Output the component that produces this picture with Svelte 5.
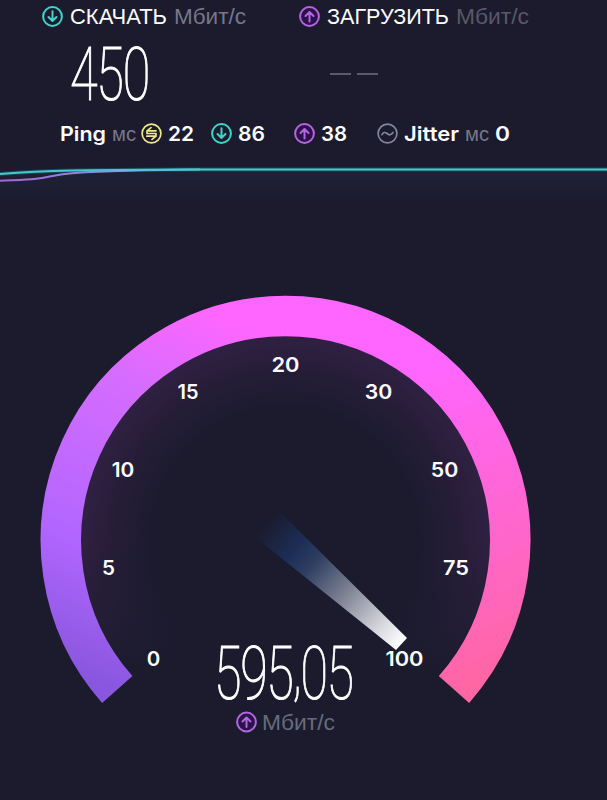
<script lang="ts">
  type IconKind = "down" | "up" | "idle" | "jitter";

  const ticks = [
    { value: "0", x: 153.5, y: 666, width: 13.5 },
    { value: "5", x: 108.5, y: 575, width: 13 },
    { value: "10", x: 123, y: 477, width: 22.5 },
    { value: "15", x: 188, y: 398.5, width: 21 },
    { value: "20", x: 285.5, y: 372, width: 28 },
    { value: "30", x: 378.5, y: 398.5, width: 27.5 },
    { value: "50", x: 444.5, y: 477, width: 27.5 },
    { value: "75", x: 456, y: 575, width: 26 },
    { value: "100", x: 404.5, y: 666, width: 38 },
  ];
</script>

{#snippet glyph(kind: IconKind)}
  <g class="icon {kind}">
    <circle cx="10.5" cy="10.5" r="9.4" />
    {#if kind === "down"}
      <path d="M10.5 5.2V15M6.5 11l4 4 4-4" />
    {:else if kind === "up"}
      <path d="M10.5 15.6V6M6.5 10l4-4 4 4" />
    {:else if kind === "idle"}
      <path d="M15 7.8H6l4-3.2M6 7.8v2.7h9v2.7l-4 3.2M15 13.2H5.8" />
    {:else}
      <path d="M5 11.7c1.3-2.6 3.1-2.8 5-1.2 2.1 1.8 4.1 1.9 6-1" />
    {/if}
  </g>
{/snippet}

{#snippet icon(kind: IconKind)}
  <svg width="21" height="21" viewBox="0 0 21 21">{@render glyph(kind)}</svg>
{/snippet}

<!-- Text stretched to a fixed width -->
{#snippet label(text: string, width: number, name: string)}
  <svg class="label" {width} height="30">
    <text class={name} x="0" y="22.5" textLength={width} lengthAdjust="spacingAndGlyphs">{text}</text>
  </svg>
{/snippet}

<main class="speedtest">
  <section class="panels">
    <div class="panel">
      <header>
        {@render icon("down")}
        {@render label("СКАЧАТЬ", 97, "title")}
        {@render label("Мбит/с", 72, "unit")}
      </header>
      <svg class="value" width="82" height="70">
        <text class="digits" transform="translate(-1 68) scale(.68 1)" textLength="118">450</text>
      </svg>
    </div>
    <div class="panel upload">
      <header>
        {@render icon("up")}
        {@render label("ЗАГРУЗИТЬ", 122, "title")}
        {@render label("Мбит/с", 73, "unit dim")}
      </header>
      <div class="dashes"><i></i><i></i></div>
    </div>
  </section>

  <section class="latency">
    <div class="metric ping">
      {@render label("Ping", 46, "strong")}
      {@render label("мс", 24, "ms")}
    </div>
    <div class="metric idle-value">
      {@render icon("idle")}
      {@render label("22", 26, "strong")}
    </div>
    <div class="metric down-value">
      {@render icon("down")}
      {@render label("86", 27, "strong")}
    </div>
    <div class="metric up-value">
      {@render icon("up")}
      {@render label("38", 26, "strong")}
    </div>
    <div class="metric jitter-value">
      {@render icon("jitter")}
      {@render label("Jitter", 55, "strong")}
      {@render label("мс", 24, "ms")}
      {@render label("0", 15, "strong")}
    </div>
  </section>

  <svg class="graph" width="607" height="60" viewBox="0 150 607 60">
    <defs>
      <linearGradient id="area" x1="0" y1="0" x2="0" y2="1">
        <stop offset="0" stop-color="#1f2136" />
        <stop offset="1" stop-color="#1b1b2d" />
      </linearGradient>
      <linearGradient id="uploadLine" gradientUnits="userSpaceOnUse" x1="0" y1="0" x2="200" y2="0">
        <stop offset="0" stop-color="#a267d4" />
        <stop offset=".4" stop-color="#9a7fe5" />
        <stop offset=".65" stop-color="#6fb0ea" />
        <stop offset="1" stop-color="#48c9ce" />
      </linearGradient>
    </defs>
    <path d="M0 174C50 170 90 170 200 169.5H607V205H0Z" fill="url(#area)" />
    <path class="line-edge" d="M0 174C50 170 90 170 200 169.5H607" />
    <path class="line" d="M0 174C50 170 90 170 200 169.5H607" />
    <path d="M0 180.8C15 180 25 179.8 36 178.7C50 177 55 174.3 75 173C110 170.6 150 170 200 169.6" fill="none" stroke="url(#uploadLine)" stroke-width="2" />
  </svg>

  <svg class="gauge" width="607" height="590" viewBox="0 210 607 590">
    <defs>
      <linearGradient id="ringLeft" gradientUnits="userSpaceOnUse" x1="117" y1="690" x2="286" y2="316">
        <stop offset="0" stop-color="#8957df" />
        <stop offset=".3" stop-color="#b266ff" />
        <stop offset=".7" stop-color="#d66cff" />
        <stop offset=".94" stop-color="#ff66ff" />
      </linearGradient>
      <linearGradient id="ringRight" gradientUnits="userSpaceOnUse" x1="286" y1="316" x2="455" y2="690">
        <stop offset=".25" stop-color="#ff66ff" />
        <stop offset=".7" stop-color="#ff66cc" />
        <stop offset="1" stop-color="#ff66a4" />
      </linearGradient>
      <radialGradient id="glow" gradientUnits="userSpaceOnUse" cx="285.5" cy="540.5" r="204">
        <stop offset=".64" stop-color="#1b1b2d" />
        <stop offset=".82" stop-color="#241d37" />
        <stop offset="1" stop-color="#302042" />
      </radialGradient>
      <linearGradient id="fade" gradientUnits="userSpaceOnUse" x1="0" y1="540" x2="0" y2="675">
        <stop offset="0" stop-color="#1b1b2d" stop-opacity="0" />
        <stop offset="1" stop-color="#1b1b2d" />
      </linearGradient>
      <linearGradient id="needle" gradientUnits="userSpaceOnUse" x1="266" y1="524" x2="402" y2="644">
        <stop offset="0" stop-color="#1c2d55" stop-opacity="0" />
        <stop offset=".2" stop-color="#1c2d55" />
        <stop offset=".34" stop-color="#2d3e61" />
        <stop offset=".6" stop-color="#838797" />
        <stop offset=".84" stop-color="#d5d5dc" />
        <stop offset="1" stop-color="#fff" />
      </linearGradient>
    </defs>

    <circle cx="285.5" cy="540.5" r="205" fill="url(#glow)" />
    <rect x="80" y="540" width="412" height="210" fill="url(#fade)" />

    <path class="ring" d="M117.3 689.5A224.6 224.6 0 0 1 286 316" stroke="url(#ringLeft)" />
    <path class="ring" d="M285.5 316A224.8 224.8 0 0 1 454 689.5" stroke="url(#ringRight)" />

    {#each ticks as tick}
      <text class="tick" x={tick.x} y={tick.y} textLength={tick.width} lengthAdjust="spacingAndGlyphs">{tick.value}</text>
    {/each}

    <path d="M280 512L407 638L396 650L255 537Z" fill="url(#needle)" />

    <text class="digits" transform="translate(214 699) scale(.68 1)" textLength="206">595<tspan dy="-6">,</tspan><tspan dy="6">05</tspan></text>
    <g transform="translate(236 711.5)">{@render glyph("up")}</g>
    <text class="unit readout" x="262" y="730" textLength="73" lengthAdjust="spacingAndGlyphs">Мбит/с</text>
  </svg>
</main>

<style>
  :global(body) {
    background: #1b1b2d;
  }

  .speedtest {
    width: 607px;
    height: 800px;
    overflow: hidden;
    background: #1b1b2d;
    font-family: "Liberation Sans", Arial, sans-serif;
  }

  svg {
    display: block;
    flex-shrink: 0;
  }

  .label,
  .value {
    overflow: visible;
  }

  .panels {
    display: grid;
    grid-template-columns: 257px 1fr;
    height: 117px;
    padding-left: 42px;
  }

  header {
    display: flex;
    align-items: center;
    gap: 7px;
    height: 32px;
  }

  .value {
    margin-left: 29px;
  }

  .dashes {
    display: flex;
    gap: 6px;
    padding: 41px 0 0 31px;
  }

  .dashes i {
    width: 21px;
    height: 2px;
    background: #5a5a6c;
  }

  .latency {
    display: flex;
    height: 32px;
    padding: 0 0 1px 60px;
  }

  .metric {
    display: flex;
    align-items: center;
    gap: 6px;
  }

  .idle-value {
    margin-left: 5px;
  }

  .down-value {
    margin-left: 17px;
  }

  .up-value {
    margin-left: 29px;
  }

  .jitter-value {
    margin-left: 30px;
  }

  .title {
    fill: #fff;
    font-size: 21.5px;
  }

  .unit {
    fill: #77778c;
    font-size: 21.5px;
  }

  .dim {
    fill: #58586a;
  }

  .readout {
    fill: #656b7e;
  }

  .ms {
    fill: #77778c;
    font-size: 20px;
  }

  .strong,
  .tick {
    fill: #fff;
    font-family: Inter, sans-serif;
    font-size: 20px;
    font-weight: 600;
  }

  .tick {
    text-anchor: middle;
  }

  .digits {
    fill: #fff;
    stroke: #fff;
    stroke-width: 1px;
    vector-effect: non-scaling-stroke;
    font-family: Roboto, sans-serif;
    font-size: 74px;
    font-weight: 100;
  }

  .icon {
    fill: none;
    stroke-width: 2;
    stroke-linecap: round;
    stroke-linejoin: round;
  }

  .down {
    stroke: #3ed5cc;
  }

  .up {
    fill: #2c1248;
    stroke: #b267e2;
  }

  .up path {
    fill: none;
  }

  .idle {
    stroke: #eee78d;
    stroke-width: 1.7;
  }

  .jitter {
    stroke: #85859a;
    stroke-width: 1.7;
  }

  .line,
  .line-edge {
    fill: none;
    stroke: #48c9ce;
    stroke-width: 2;
  }

  .line-edge {
    stroke: #174955;
    stroke-width: 4;
  }

  .ring {
    fill: none;
    stroke-width: 40.5;
  }
</style>
